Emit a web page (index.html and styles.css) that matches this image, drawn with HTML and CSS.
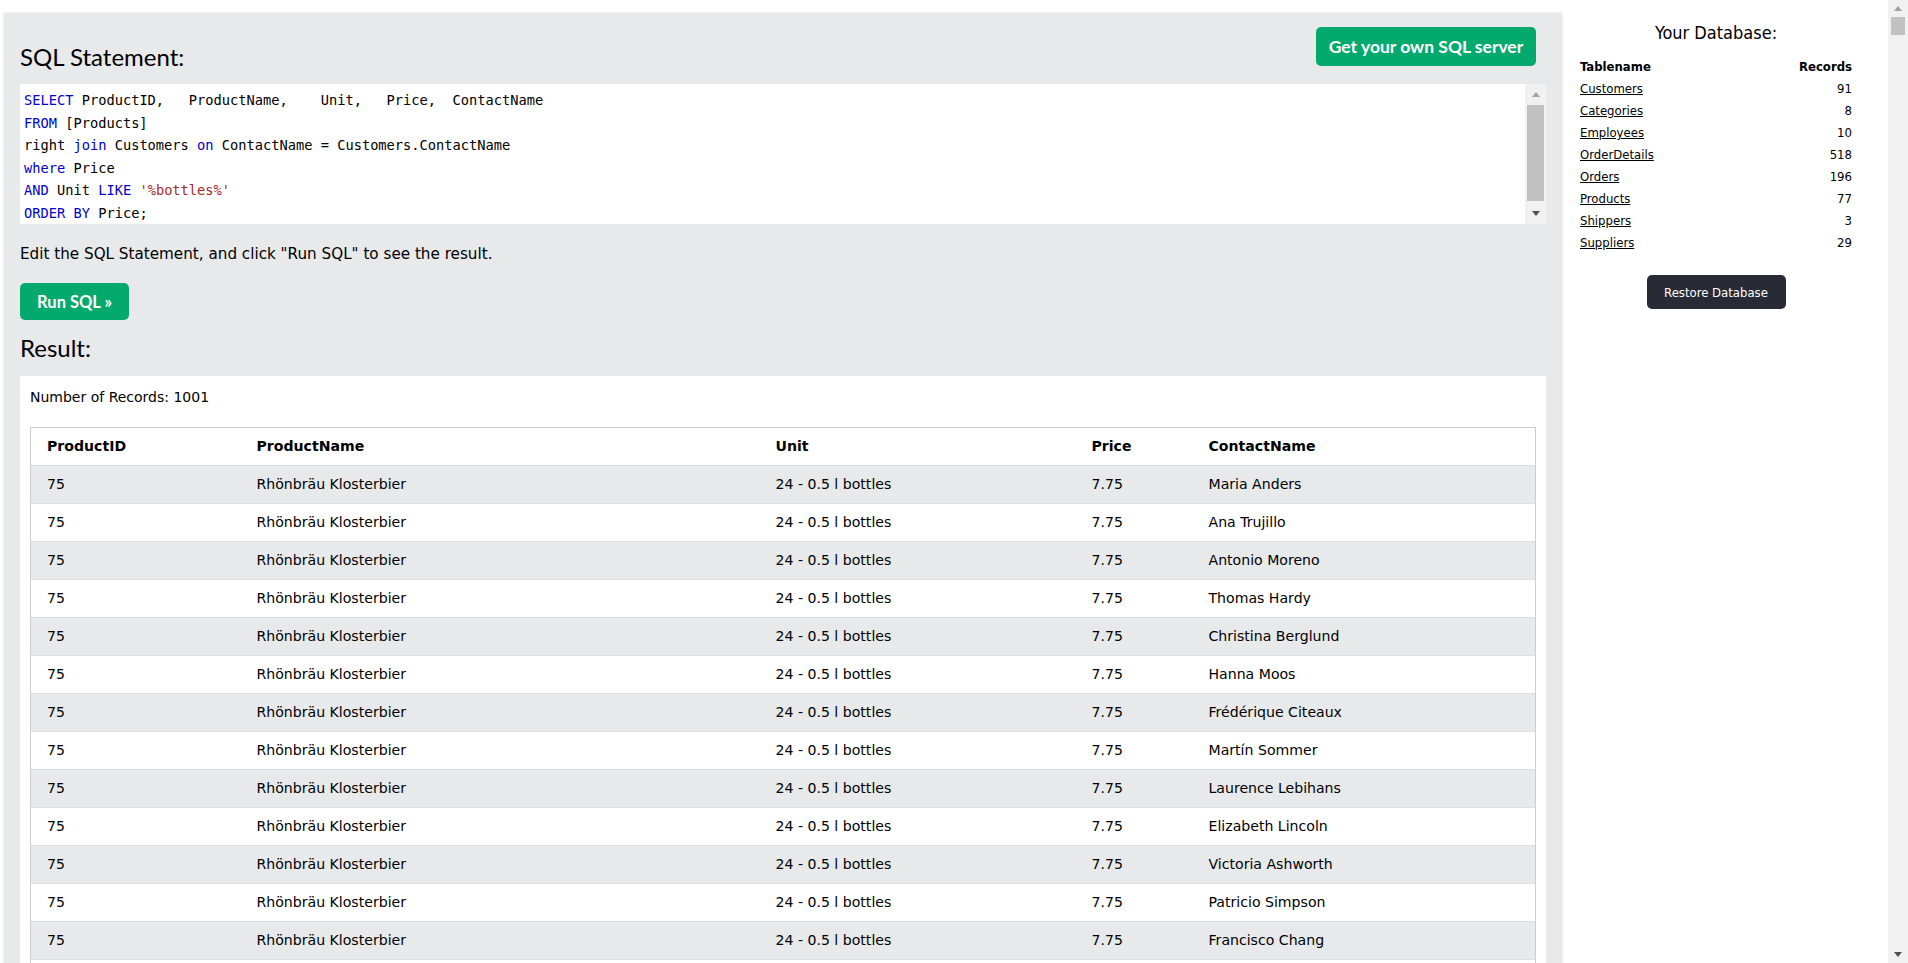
FILE: index.html
```html
<!DOCTYPE html>
<html lang="en">
<head>
<meta charset="utf-8">
<title>SQL Tryit</title>
<link rel="stylesheet" href="styles.css">
</head>
<body>
<div class="page">
  <div class="main">
    <div class="panel">
      <div class="panel-head">
        <h3 class="heading">SQL Statement:</h3>
        <a class="btn-server">Get your own SQL server</a>
      </div>
      <div class="code-box">
        <div class="code">
          <div class="line"><span class="kw">SELECT</span> ProductID,   ProductName,    Unit,   Price,  ContactName</div>
          <div class="line"><span class="kw">FROM</span> [Products]</div>
          <div class="line">right <span class="kw">join</span> Customers <span class="kw">on</span> ContactName = Customers.ContactName</div>
          <div class="line"><span class="kw">where</span> Price</div>
          <div class="line"><span class="kw">AND</span> Unit <span class="kw">LIKE</span> <span class="str">'%bottles%'</span></div>
          <div class="line"><span class="kw">ORDER BY</span> Price;</div>
        </div>
        <div class="vscroll">
          <div class="arrow-box"><span class="tri-up light"></span></div>
          <div class="thumb"></div>
          <div class="spacer"></div>
          <div class="arrow-box"><span class="tri-down"></span></div>
        </div>
      </div>
      <p class="hint">Edit the SQL Statement, and click "Run SQL" to see the result.</p>
      <div class="btn-run">Run SQL »</div>
      <h3 class="heading result-h">Result:</h3>
      <div class="result">
        <div class="count">Number of Records: 1001</div>
        <table class="grid">
          <thead>
            <tr><th class="c1">ProductID</th><th class="c2">ProductName</th><th class="c3">Unit</th><th class="c4">Price</th><th>ContactName</th></tr>
          </thead>
          <tbody>
            <tr><td>75</td><td>Rhönbräu Klosterbier</td><td>24 - 0.5 l bottles</td><td>7.75</td><td>Maria Anders</td></tr>
            <tr><td>75</td><td>Rhönbräu Klosterbier</td><td>24 - 0.5 l bottles</td><td>7.75</td><td>Ana Trujillo</td></tr>
            <tr><td>75</td><td>Rhönbräu Klosterbier</td><td>24 - 0.5 l bottles</td><td>7.75</td><td>Antonio Moreno</td></tr>
            <tr><td>75</td><td>Rhönbräu Klosterbier</td><td>24 - 0.5 l bottles</td><td>7.75</td><td>Thomas Hardy</td></tr>
            <tr><td>75</td><td>Rhönbräu Klosterbier</td><td>24 - 0.5 l bottles</td><td>7.75</td><td>Christina Berglund</td></tr>
            <tr><td>75</td><td>Rhönbräu Klosterbier</td><td>24 - 0.5 l bottles</td><td>7.75</td><td>Hanna Moos</td></tr>
            <tr><td>75</td><td>Rhönbräu Klosterbier</td><td>24 - 0.5 l bottles</td><td>7.75</td><td>Frédérique Citeaux</td></tr>
            <tr><td>75</td><td>Rhönbräu Klosterbier</td><td>24 - 0.5 l bottles</td><td>7.75</td><td>Martín Sommer</td></tr>
            <tr><td>75</td><td>Rhönbräu Klosterbier</td><td>24 - 0.5 l bottles</td><td>7.75</td><td>Laurence Lebihans</td></tr>
            <tr><td>75</td><td>Rhönbräu Klosterbier</td><td>24 - 0.5 l bottles</td><td>7.75</td><td>Elizabeth Lincoln</td></tr>
            <tr><td>75</td><td>Rhönbräu Klosterbier</td><td>24 - 0.5 l bottles</td><td>7.75</td><td>Victoria Ashworth</td></tr>
            <tr><td>75</td><td>Rhönbräu Klosterbier</td><td>24 - 0.5 l bottles</td><td>7.75</td><td>Patricio Simpson</td></tr>
            <tr><td>75</td><td>Rhönbräu Klosterbier</td><td>24 - 0.5 l bottles</td><td>7.75</td><td>Francisco Chang</td></tr>
            <tr><td>75</td><td>Rhönbräu Klosterbier</td><td>24 - 0.5 l bottles</td><td>7.75</td><td>Yang Wang</td></tr>
          </tbody>
        </table>
      </div>
    </div>
  </div>
  <aside class="side">
    <div class="side-title">Your Database:</div>
    <table class="dbtable">
      <tr><th class="tl">Tablename</th><th class="tr">Records</th></tr>
      <tr><td class="tl"><a href="#">Customers</a></td><td class="tr">91</td></tr>
      <tr><td class="tl"><a href="#">Categories</a></td><td class="tr">8</td></tr>
      <tr><td class="tl"><a href="#">Employees</a></td><td class="tr">10</td></tr>
      <tr><td class="tl"><a href="#">OrderDetails</a></td><td class="tr">518</td></tr>
      <tr><td class="tl"><a href="#">Orders</a></td><td class="tr">196</td></tr>
      <tr><td class="tl"><a href="#">Products</a></td><td class="tr">77</td></tr>
      <tr><td class="tl"><a href="#">Shippers</a></td><td class="tr">3</td></tr>
      <tr><td class="tl"><a href="#">Suppliers</a></td><td class="tr">29</td></tr>
    </table>
    <div class="restore-wrap"><div class="btn-restore">Restore Database</div></div>
  </aside>
  <div class="pagebar">
    <div class="arrow-box pb"><span class="tri-up light"></span></div>
    <div class="pthumb"></div>
    <div class="spacer"></div>
    <div class="arrow-box pb"><span class="tri-down"></span></div>
  </div>
</div>
</body>
</html>
```
FILE: styles.css
```css
html, body {
  margin: 0;
  padding: 0;
  background: #ffffff;
}
body {
  font-family: "DejaVu Sans", Verdana, sans-serif;
  color: #000000;
}
.page {
  display: flex;
  height: 963px;
  overflow: hidden;
}
.main {
  flex: 0 0 1562px;
  box-sizing: border-box;
  padding: 13px 0 0 4px;
}
.panel {
  background: #E7E9EB;
  padding: 14px 16px 0 16px;
  box-shadow: 0 0 2px rgba(0, 0, 0, 0.16);
}
.panel-head {
  display: flex;
  justify-content: space-between;
  align-items: flex-start;
  height: 57px;
}
.heading {
  margin: 16px 0 0 0;
  font-family: Lato, "Open Sans", sans-serif;
  font-weight: 400;
  font-size: 24px;
  line-height: 28.8px;
}
.btn-server {
  display: flex;
  align-items: center;
  justify-content: center;
  box-sizing: border-box;
  width: 220px;
  height: 39px;
  margin-right: 10px;
  background: #04AA6D;
  color: #ffffff;
  border-radius: 5px;
  font-family: Lato, "Open Sans", sans-serif;
  font-weight: 700;
  font-size: 17.5px;
  text-decoration: none;
}
.code-box {
  display: flex;
  height: 140px;
  background: #ffffff;
}
.code {
  flex: 1;
  padding: 5px 4px;
  font-family: "DejaVu Sans Mono", "Liberation Mono", monospace;
  font-size: 13.7px;
  line-height: 22.5px;
  color: #000000;
  overflow: hidden;
}
.line {
  white-space: pre;
  height: 22.5px;
}
.kw { color: #0000CD; }
.str { color: #A52A2A; }
.vscroll {
  flex: 0 0 21px;
  background: #F1F1F1;
  display: flex;
  flex-direction: column;
  align-items: center;
}
.arrow-box {
  height: 21px;
  width: 100%;
  display: flex;
  align-items: center;
  justify-content: center;
}
.tri-up {
  width: 0;
  height: 0;
  border-left: 4.5px solid transparent;
  border-right: 4.5px solid transparent;
  border-bottom: 5px solid #505050;
}
.tri-up.light { border-bottom-color: #A3A3A3; }
.tri-down {
  width: 0;
  height: 0;
  border-left: 4.5px solid transparent;
  border-right: 4.5px solid transparent;
  border-top: 5px solid #505050;
}
.thumb {
  width: 17px;
  height: 96px;
  background: #C1C1C1;
}
.spacer { flex: 1; }
.hint {
  margin: 19px 0 0 0;
  font-size: 15.2px;
  line-height: 22.5px;
}
.btn-run {
  display: flex;
  align-items: center;
  justify-content: center;
  width: 109px;
  height: 37px;
  margin-top: 17.5px;
  background: #04AA6D;
  color: #ffffff;
  border-radius: 5px;
  font-family: Lato, "Open Sans", sans-serif;
  font-weight: 700;
  font-size: 16.5px;
}
.result-h {
  margin-top: 14px;
}
.result {
  margin-top: 13px;
  background: #ffffff;
  padding: 10px;
}
.count {
  font-size: 14px;
  line-height: 22px;
}
.grid {
  margin-top: 19px;
  width: 100%;
  border-collapse: collapse;
  border: 1px solid #CCCCCC;
  table-layout: fixed;
  font-size: 14.1px;
}
.grid tr {
  border-bottom: 1px solid #DDDDDD;
}
.grid th,
.grid td {
  padding: 8px 8px;
  line-height: 21px;
  text-align: left;
  white-space: nowrap;
}
.grid th:first-child,
.grid td:first-child {
  padding-left: 16px;
}
.grid th { font-weight: 700; }
.grid .c1 { width: 218px; box-sizing: border-box; }
.grid .c2 { width: 519px; box-sizing: border-box; }
.grid .c3 { width: 316px; box-sizing: border-box; }
.grid .c4 { width: 117px; box-sizing: border-box; }
.grid tbody tr:nth-child(odd) { background: #E7E9EB; }
.grid thead tr { background: #ffffff; }

.side {
  flex: 0 0 306px;
  box-sizing: border-box;
  padding: 21px 16px 0 18px;
  font-family: "DejaVu Sans Condensed", "DejaVu Sans", sans-serif;
}
.side-title {
  text-align: center;
  font-size: 18px;
  line-height: 24px;
}
.dbtable {
  margin-top: 11px;
  width: 100%;
  border-collapse: collapse;
  font-size: 13px;
}
.dbtable th,
.dbtable td {
  padding: 0;
  line-height: 22px;
}
.dbtable .tl { text-align: left; }
.dbtable .tr { text-align: right; }
.dbtable a { color: #000000; text-decoration: underline; }
.restore-wrap {
  display: flex;
  justify-content: center;
  margin-top: 21px;
}
.btn-restore {
  display: flex;
  align-items: center;
  justify-content: center;
  width: 139px;
  height: 34px;
  background: #282A35;
  color: #ffffff;
  border-radius: 5px;
  font-size: 13px;
}
.pagebar {
  flex: 0 0 20px;
  margin-left: 20px;
  background: #F1F1F1;
  display: flex;
  flex-direction: column;
  align-items: center;
}
.arrow-box.pb { height: 17px; }
.pthumb {
  width: 14px;
  height: 18px;
  background: #C1C1C1;
}
```
